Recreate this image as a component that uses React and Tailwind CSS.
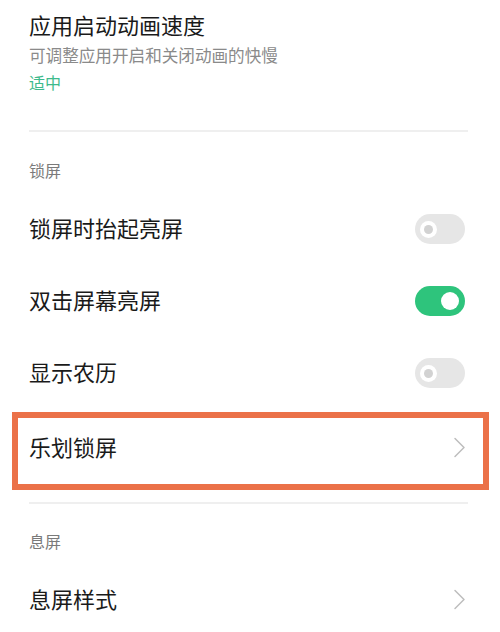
import React from "react";

const font = { fontFamily: '"Noto Sans CJK SC", "Noto Sans", sans-serif' };

function Toggle({ on }) {
  return on ? (
    <div className="relative flex h-[30px] w-[50px] items-center justify-end rounded-full bg-[#2ec47c] pr-[6px]">
      <div className="h-[18px] w-[18px] rounded-full bg-white" />
    </div>
  ) : (
    <div className="relative flex h-[30px] w-[50px] items-center rounded-full bg-[#e6e6e6] pl-[5px]">
      <div className="flex h-[17px] w-[17px] items-center justify-center rounded-full bg-white">
        <div className="h-[9px] w-[9px] rounded-full bg-[#d2d2d2]" />
      </div>
    </div>
  );
}

function Chevron() {
  return (
    <svg width="13" height="21" viewBox="0 0 13 21" fill="none">
      <polyline
        points="2,1.5 11,10.5 2,19.5"
        stroke="#bdbdbd"
        strokeWidth="1.5"
        strokeLinecap="round"
        strokeLinejoin="round"
      />
    </svg>
  );
}

function SwitchRow({ label, on }) {
  return (
    <div className="flex h-[72px] items-center justify-between pl-[29px] pr-[35px]">
      <span className="pb-[5px] text-[22px] leading-[30px] text-[#1a1a1a]">{label}</span>
      <Toggle on={on} />
    </div>
  );
}

export default function App() {
  return (
    <div className="h-[632px] w-[500px] overflow-hidden bg-white" style={font}>
      <div className="pl-[29px] pt-[9px]">
        <div className="text-[22px] leading-[30px] text-[#1a1a1a]">应用启动动画速度</div>
        <div className="mt-[4px] text-[16.6px] leading-[24px] text-[#8a8a8a]">
          可调整应用开启和关闭动画的快慢
        </div>
        <div className="mt-[3px] text-[16px] leading-[24px] text-[#3dba8c]">适中</div>
      </div>

      <div className="ml-[29px] mr-[32px] mt-[36px] h-[2px] bg-[#efefef]" />

      <div className="mt-[26px] pl-[29px] text-[16px] leading-[24px] text-[#7a7a7a]">锁屏</div>

      <div className="mt-[11px]">
        <SwitchRow label="锁屏时抬起亮屏" on={false} />
        <SwitchRow label="双击屏幕亮屏" on={true} />
        <SwitchRow label="显示农历" on={false} />
      </div>

      <div className="ml-[12px] mr-[11px] mt-[3px] flex h-[78px] items-center justify-between border-[6px] border-[#eb7148] pb-[8px] pl-[11px] pr-[17px]">
        <span className="pb-[2px] text-[22px] leading-[30px] text-[#1a1a1a]">乐划锁屏</span>
        <Chevron />
      </div>

      <div className="ml-[29px] mr-[32px] mt-[12px] h-[2px] bg-[#efefef]" />

      <div className="mt-[25px] pl-[29px] text-[16px] leading-[24px] text-[#7a7a7a]">息屏</div>

      <div className="mt-[11px] flex h-[72px] items-center justify-between pl-[29px] pr-[34px]">
        <span className="pb-[5px] text-[22px] leading-[30px] text-[#1a1a1a]">息屏样式</span>
        <div className="pb-[2px]">
          <Chevron />
        </div>
      </div>
    </div>
  );
}
